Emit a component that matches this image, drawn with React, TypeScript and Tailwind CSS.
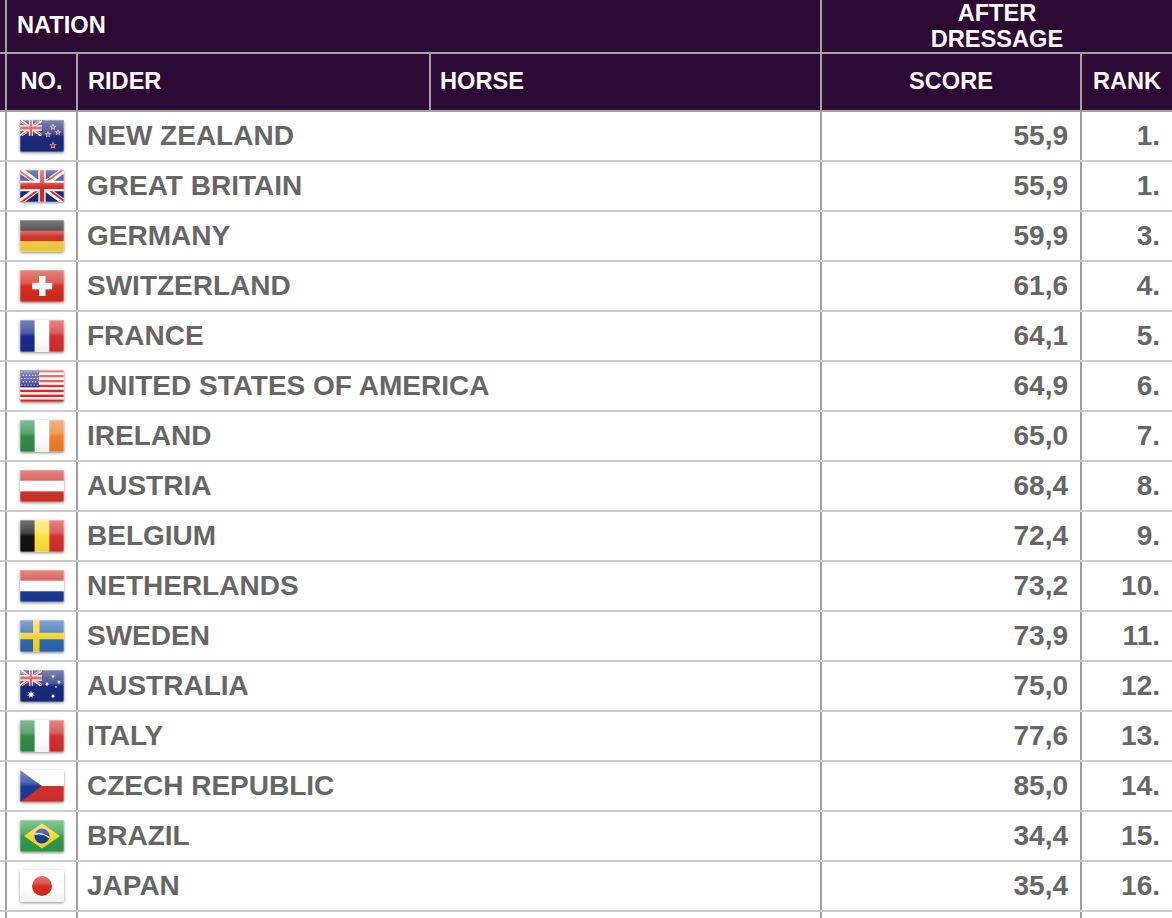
import React from "react";

// star polygon points
function star(cx: number, cy: number, r: number, n = 5, inner = 0.42) {
  const pts: string[] = [];
  for (let i = 0; i < n * 2; i++) {
    const rad = i % 2 === 0 ? r : r * inner;
    const a = (Math.PI * i) / n - Math.PI / 2;
    pts.push(`${(cx + rad * Math.cos(a)).toFixed(2)},${(cy + rad * Math.sin(a)).toFixed(2)}`);
  }
  return pts.join(" ");
}

function UnionJack({ id, w, h }: { id: string; w: number; h: number }) {
  return (
    <svg x={0} y={0} width={w} height={h} viewBox="0 0 60 30" preserveAspectRatio="none">
      <defs>
        <clipPath id={`${id}-t`}>
          <path d="M30,15 h30 v15 z v15 h-30 z h-30 v-15 z v-15 h30 z" />
        </clipPath>
      </defs>
      <rect width="60" height="30" fill="#1b2a7a" />
      <path d="M0,0 L60,30 M60,0 L0,30" stroke="#fff" strokeWidth="6" />
      <path d="M0,0 L60,30 M60,0 L0,30" clipPath={`url(#${id}-t)`} stroke="#d0312d" strokeWidth="4" />
      <path d="M30,0 v30 M0,15 h60" stroke="#fff" strokeWidth="10" />
      <path d="M30,0 v30 M0,15 h60" stroke="#d0312d" strokeWidth="6" />
    </svg>
  );
}

function FlagArt({ code }: { code: string }) {
  const W = 44;
  const H = 32;
  switch (code) {
    case "nz":
      return (
        <>
          <rect width={W} height={H} fill="#1b2a7a" />
          <UnionJack id="nz" w={22} h={16} />
          {[
            [33, 7, 2.7],
            [28, 14.5, 2.5],
            [38, 12.5, 2.3],
            [33, 25.5, 3],
          ].map(([x, y, r], i) => (
            <g key={i}>
              <polygon points={star(x, y, r + 0.9)} fill="#fff" />
              <polygon points={star(x, y, r)} fill="#d0312d" />
            </g>
          ))}
        </>
      );
    case "gb":
      return <UnionJack id="gb" w={W} h={H} />;
    case "de":
      return (
        <>
          <rect width={W} height={11} fill="#1a1a1a" />
          <rect y={10.7} width={W} height={11} fill="#d0312d" />
          <rect y={21.3} width={W} height={11} fill="#f4d03f" />
        </>
      );
    case "ch":
      return (
        <>
          <rect width={W} height={H} fill="#d52b1e" />
          <rect x={19} y={6} width={6.5} height={20} fill="#fff" />
          <rect x={12.2} y={12.8} width={20} height={6.5} fill="#fff" />
        </>
      );
    case "fr":
      return (
        <>
          <rect width={15} height={H} fill="#1c2a8c" />
          <rect x={14.6} width={15} height={H} fill="#fff" />
          <rect x={29.3} width={15} height={H} fill="#d0312d" />
        </>
      );
    case "us":
      return (
        <>
          <rect width={W} height={H} fill="#fff" />
          {Array.from({ length: 7 }).map((_, i) => (
            <rect key={i} y={(i * 2 * H) / 13} width={W} height={H / 13} fill="#d0312d" />
          ))}
          <rect width={19} height={(7 * H) / 13} fill="#2b2f8a" />
          {Array.from({ length: 5 }).map((_, r) =>
            Array.from({ length: 6 }).map((_, c) => (
              <circle key={`${r}-${c}`} cx={1.8 + c * 3.1 + (r % 2) * 1.5} cy={1.9 + r * 3.3} r={0.7} fill="#fff" opacity={0.85} />
            ))
          )}
        </>
      );
    case "ie":
      return (
        <>
          <rect width={15} height={H} fill="#2f8a4a" />
          <rect x={14.6} width={15} height={H} fill="#fff" />
          <rect x={29.3} width={15} height={H} fill="#ee7f2d" />
        </>
      );
    case "at":
      return (
        <>
          <rect width={W} height={H} fill="#d0312d" />
          <rect y={10.7} width={W} height={10.7} fill="#fff" />
        </>
      );
    case "be":
      return (
        <>
          <rect width={15} height={H} fill="#111" />
          <rect x={14.6} width={15} height={H} fill="#f7e23b" />
          <rect x={29.3} width={15} height={H} fill="#d0312d" />
        </>
      );
    case "nl":
      return (
        <>
          <rect width={W} height={11} fill="#d0312d" />
          <rect y={10.7} width={W} height={11} fill="#fff" />
          <rect y={21.3} width={W} height={11} fill="#1c3a94" />
        </>
      );
    case "se":
      return (
        <>
          <rect width={W} height={H} fill="#2a66b0" />
          <rect x={13} width={6.5} height={H} fill="#f6d32d" />
          <rect y={12.8} width={W} height={6.5} fill="#f6d32d" />
        </>
      );
    case "au":
      return (
        <>
          <rect width={W} height={H} fill="#1b2a7a" />
          <UnionJack id="au" w={22} h={16} />
          <polygon points={star(11, 24.5, 4, 7, 0.45)} fill="#fff" />
          {[
            [33, 6.5, 2.2],
            [27, 14, 2.2],
            [39, 12, 2.2],
            [33, 26, 2.4],
            [36, 17, 1.3],
          ].map(([x, y, r], i) => (
            <polygon key={i} points={star(x, y, r, i === 4 ? 5 : 7, 0.45)} fill="#fff" />
          ))}
        </>
      );
    case "it":
      return (
        <>
          <rect width={15} height={H} fill="#2f8a4a" />
          <rect x={14.6} width={15} height={H} fill="#fff" />
          <rect x={29.3} width={15} height={H} fill="#d0312d" />
        </>
      );
    case "cz":
      return (
        <>
          <rect width={W} height={16} fill="#fff" />
          <rect y={16} width={W} height={16} fill="#d0312d" />
          <polygon points="0,0 22,16 0,32" fill="#1c3a94" />
        </>
      );
    case "br":
      return (
        <>
          <rect width={W} height={H} fill="#2f9a4a" />
          <polygon points="4,16 22,3.5 40,16 22,28.5" fill="#f6d32d" />
          <circle cx={22} cy={16} r={7.5} fill="#1c3a94" />
          <path d="M14.8,14.2 Q22,12.2 29.2,17.6" stroke="#fff" strokeWidth="1.4" fill="none" />
        </>
      );
    case "jp":
      return (
        <>
          <rect width={W} height={H} fill="#fff" />
          <circle cx={22} cy={16} r={10} fill="#d52b1e" />
        </>
      );
    default:
      return <rect width={W} height={H} fill="#ccc" />;
  }
}

function Flag({ code }: { code: string }) {
  return (
    <div className="relative w-[44px] h-[32px] rounded-[2px] overflow-hidden shadow-[0_1px_3px_rgba(0,0,0,0.45)]">
      <svg width="44" height="32" viewBox="0 0 44 32" className="block">
        <FlagArt code={code} />
      </svg>
      {/* glossy shine */}
      <div className="absolute inset-0 rounded-[2px] bg-[linear-gradient(to_bottom,rgba(255,255,255,0.42)_0%,rgba(255,255,255,0.22)_40%,rgba(255,255,255,0)_52%,rgba(0,0,0,0.06)_100%)] shadow-[inset_0_0_0_1px_rgba(255,255,255,0.25)]" />
    </div>
  );
}

const rows = [
  { flag: "nz", name: "NEW ZEALAND", score: "55,9", rank: "1." },
  { flag: "gb", name: "GREAT BRITAIN", score: "55,9", rank: "1." },
  { flag: "de", name: "GERMANY", score: "59,9", rank: "3." },
  { flag: "ch", name: "SWITZERLAND", score: "61,6", rank: "4." },
  { flag: "fr", name: "FRANCE", score: "64,1", rank: "5." },
  { flag: "us", name: "UNITED STATES OF AMERICA", score: "64,9", rank: "6." },
  { flag: "ie", name: "IRELAND", score: "65,0", rank: "7." },
  { flag: "at", name: "AUSTRIA", score: "68,4", rank: "8." },
  { flag: "be", name: "BELGIUM", score: "72,4", rank: "9." },
  { flag: "nl", name: "NETHERLANDS", score: "73,2", rank: "10." },
  { flag: "se", name: "SWEDEN", score: "73,9", rank: "11." },
  { flag: "au", name: "AUSTRALIA", score: "75,0", rank: "12." },
  { flag: "it", name: "ITALY", score: "77,6", rank: "13." },
  { flag: "cz", name: "CZECH REPUBLIC", score: "85,0", rank: "14." },
  { flag: "br", name: "BRAZIL", score: "34,4", rank: "15." },
  { flag: "jp", name: "JAPAN", score: "35,4", rank: "16." },
];

export default function App() {
  return (
    <div className="w-[1172px] h-[918px] overflow-hidden bg-white font-['Liberation_Sans',Arial,sans-serif] font-bold">
      {/* HEADER ROW 1 */}
      <div className="flex h-[54px] bg-[#2b0a33] border-b-2 border-[#a0a0a0] text-white text-[23.6px]">
        <div className="w-[5px] shrink-0" />
        <div className="w-[815px] shrink-0 border-l-2 border-[#a0a0a0] flex items-center pl-[10px]">NATION</div>
        <div className="flex-1 border-l-2 border-[#a0a0a0] flex items-center justify-center text-center leading-[26px] overflow-hidden">
          AFTER
          <br />
          DRESSAGE
        </div>
      </div>

      {/* HEADER ROW 2 */}
      <div className="flex h-[58px] bg-[#2b0a33] border-b-2 border-[#a0a0a0] text-white text-[23.6px]">
        <div className="w-[5px] shrink-0" />
        <div className="w-[71px] shrink-0 border-l-2 border-[#a0a0a0] flex items-center justify-center">NO.</div>
        <div className="w-[353px] shrink-0 border-l-2 border-[#a0a0a0] flex items-center pl-[10px]">RIDER</div>
        <div className="w-[391px] shrink-0 border-l-2 border-[#a0a0a0] flex items-center pl-[9px]">HORSE</div>
        <div className="w-[260px] shrink-0 border-l-2 border-[#a0a0a0] flex items-center justify-center">SCORE</div>
        <div className="flex-1 border-l-2 border-[#a0a0a0] flex items-center justify-center">RANK</div>
      </div>

      {/* DATA ROWS */}
      {rows.map((r) => (
        <div key={r.name} className="flex h-[50px] border-b-2 border-[#cacaca] text-[#666] text-[28px]">
          <div className="w-[5px] shrink-0" />
          <div className="w-[71px] shrink-0 border-l-2 border-[#a0a0a0] flex items-center justify-center">
            <Flag code={r.flag} />
          </div>
          <div className="w-[744px] shrink-0 border-l-2 border-[#a0a0a0] flex items-center pl-[9px]">{r.name}</div>
          <div className="w-[260px] shrink-0 border-l-2 border-[#a0a0a0] flex items-center justify-end pr-[12px]">{r.score}</div>
          <div className="flex-1 border-l-2 border-[#a0a0a0] flex items-center justify-end pr-[12px]">{r.rank}</div>
        </div>
      ))}

      {/* next row, cut off by the window */}
      <div className="flex h-[50px]">
        <div className="w-[5px] shrink-0" />
        <div className="w-[71px] shrink-0 border-l-2 border-[#a0a0a0]" />
        <div className="w-[744px] shrink-0 border-l-2 border-[#a0a0a0]" />
        <div className="w-[260px] shrink-0 border-l-2 border-[#a0a0a0]" />
        <div className="flex-1 border-l-2 border-[#a0a0a0]" />
      </div>
    </div>
  );
}
